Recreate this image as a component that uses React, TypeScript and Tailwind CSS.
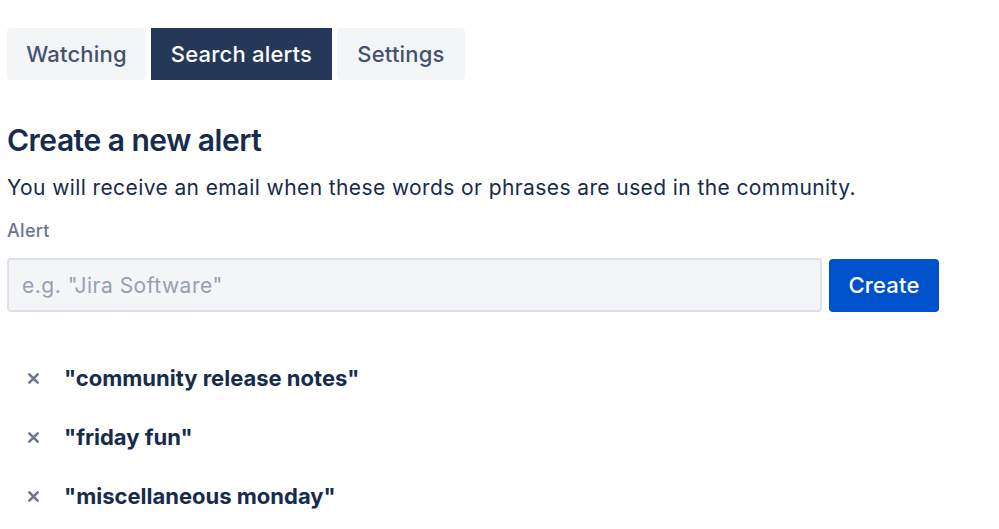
import React from 'react';

const alerts = ['"community release notes"', '"friday fun"', '"miscellaneous monday"'];

const tabs = [
  { label: 'Watching', active: false, w: 'w-[139px]' },
  { label: 'Search alerts', active: true, w: 'w-[181px]' },
  { label: 'Settings', active: false, w: 'w-[128px]' },
];

export default function App() {
  return (
    <div className="min-h-screen bg-white px-[7px] pt-[28px] text-[#172b4d]" style={{ fontFamily: 'Inter, "Noto Sans", sans-serif' }}>
      <div className="flex gap-[5px]">
        {tabs.map((t) => (
          <button
            key={t.label}
            type="button"
            className={`${t.w} h-[52px] text-[22px] font-medium tracking-[0.2px] ${
              t.active ? 'bg-[#253858] text-white' : 'rounded-[4px] bg-[#f4f5f7] text-[#42526e]'
            }`}
          >
            {t.label}
          </button>
        ))}
      </div>

      <h1 className="mt-[42px] text-[30px] font-semibold leading-[36px] tracking-[-0.5px]">Create a new alert</h1>
      <p className="mt-[17px] text-[21px] leading-[26px] tracking-[0.4px]">
        You will receive an email when these words or phrases are used in the community.
      </p>
      <label className="mt-[19px] block text-[18px] font-medium leading-[22px] tracking-[0.3px] text-[#6b778c]">Alert</label>

      <div className="mt-[16px] flex items-center gap-[7px]">
        <input
          type="text"
          placeholder={'e.g. "Jira Software"'}
          className="h-[54px] w-[815px] rounded-[4px] border-2 border-[#dfe1e6] bg-[#f4f5f7] px-[13px] text-[21px] tracking-[0.5px] placeholder:text-[#97a0af] outline-none"
        />
        <button type="button" className="h-[53px] w-[110px] rounded-[4px] bg-[#0052cc] text-[22px] font-medium tracking-[0.2px] text-white">
          Create
        </button>
      </div>

      <ul className="mt-[53px] flex flex-col gap-[33px] pl-[20px]">
        {alerts.map((a) => (
          <li key={a} className="flex items-center gap-[24px] leading-[26px]">
            <svg width="13" height="13" viewBox="0 0 14 14" className="text-[#6b778c]">
              <path d="M2.5 2.5 L11.5 11.5 M11.5 2.5 L2.5 11.5" stroke="currentColor" strokeWidth="2.8" strokeLinecap="round" />
            </svg>
            <span className="text-[22px] font-bold">{a}</span>
          </li>
        ))}
      </ul>
    </div>
  );
}
